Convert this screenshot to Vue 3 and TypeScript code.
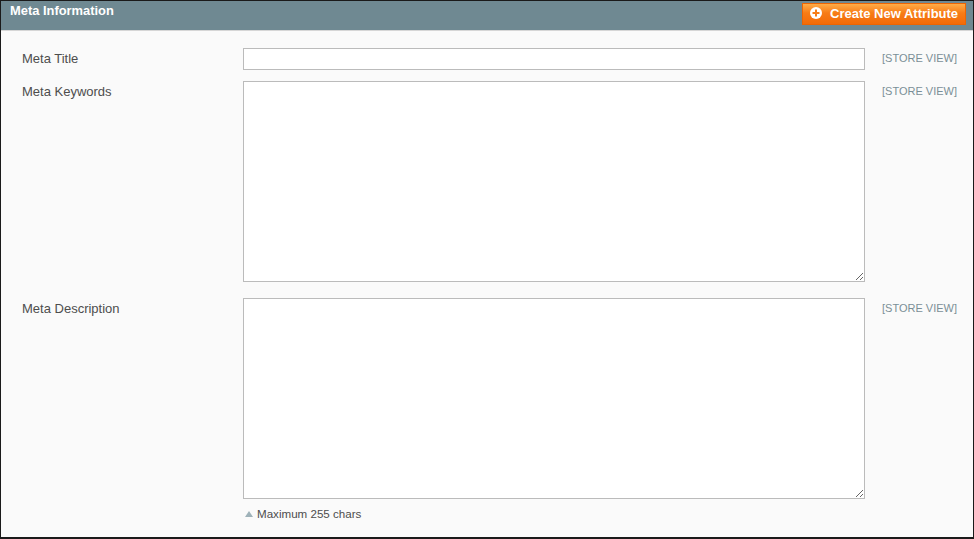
<template>
  <div class="panel">
    <header class="panel-head">
      <h2>Meta Information</h2>
      <button class="add-btn" type="button">
        <svg width="12" height="12" viewBox="0 0 12 12" aria-hidden="true">
          <circle cx="6" cy="6" r="6" fill="#fff" />
          <path d="M5 2.5h2V5h2.5v2H7v2.5H5V7H2.5V5H5z" fill="#f77c16" />
        </svg>
        Create New Attribute
      </button>
    </header>
    <div class="form">
      <div v-for="field in fields" :key="field.label" class="row" :class="field.kind">
        <label>{{ field.label }}</label>
        <div class="control">
          <input v-if="field.kind === 'line'" type="text" />
          <textarea v-else></textarea>
          <p v-if="field.note" class="note"><span class="arrow"></span>{{ field.note }}</p>
        </div>
        <span class="scope">[STORE VIEW]</span>
      </div>
    </div>
  </div>
</template>

<script setup lang="ts">
type Field = { label: string; kind: "line" | "area"; note?: string };

const fields: Field[] = [
  { label: "Meta Title", kind: "line" },
  { label: "Meta Keywords", kind: "area" },
  { label: "Meta Description", kind: "area", note: "Maximum 255 chars" },
];
</script>

<style>
html,
body {
  margin: 0;
  background: #fff;
}
</style>

<style scoped>
.panel {
  box-sizing: border-box;
  width: 974px;
  height: 539px;
  border: 1px solid #1a1a1a;
  border-bottom-width: 2px;
  background: #fafafa;
  font-family: "Liberation Sans", Arial, sans-serif;
  overflow: hidden;
}
.panel-head {
  display: flex;
  justify-content: space-between;
  align-items: flex-start;
  height: 30px;
  box-sizing: border-box;
  padding: 2px 7px 0 9px;
  background: #6f8992;
  border-bottom: 1px solid #d6d6d6;
}
.panel-head h2 {
  margin: 0;
  font-size: 12.9px;
  line-height: 16px;
  font-weight: 700;
  color: #fff;
}
.add-btn {
  display: flex;
  align-items: center;
  gap: 8px;
  width: 164px;
  height: 22px;
  padding: 0 0 2px 7px;
  border: 1px solid #ed6502;
  background: linear-gradient(#ffac47, #f77c16 45%, #f36b08);
  color: #fff;
  font: 700 13px "Liberation Sans", Arial, sans-serif;
  white-space: nowrap;
}
.form {
  padding-top: 17px;
}
.row {
  display: grid;
  grid-template-columns: 221px 622px 1fr;
  column-gap: 0;
  padding-left: 21px;
  font-size: 13px;
  color: #4d4d4d;
}
.row.line {
  margin-bottom: 11px;
}
.row.area {
  margin-bottom: 16px;
}
label {
  padding-top: 3px;
  line-height: 15px;
}
input,
textarea {
  display: block;
  box-sizing: border-box;
  width: 622px;
  border: 1px solid #bbb;
  background: #fff;
  margin: 0;
  padding: 2px;
}
input {
  height: 22px;
}
textarea {
  height: 201px;
}
.scope {
  padding: 3px 0 0 17px;
  line-height: 14px;
  font-size: 11px;
  color: #7a8f97;
  white-space: nowrap;
}
.note {
  display: flex;
  align-items: center;
  margin: 8px 0 0 2px;
  font-size: 11.6px;
  line-height: 14px;
  color: #4d4d4d;
}
.arrow {
  width: 0;
  height: 0;
  margin-right: 4px;
  border-left: 4px solid transparent;
  border-right: 4px solid transparent;
  border-bottom: 6px solid #9fb2b9;
}
</style>
